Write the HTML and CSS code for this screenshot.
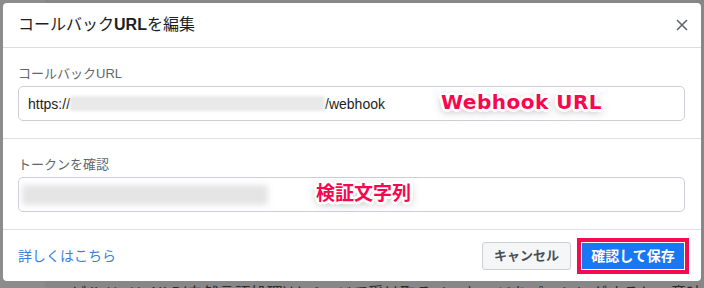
FILE: index.html
```html
<!DOCTYPE html>
<html lang="ja">
<head>
<meta charset="utf-8">
<title>コールバックURLを編集</title>
<link rel="stylesheet" href="styles.css">
</head>
<body>
<div class="page">
  <div class="side"></div>
  <div class="main">
    <p class="bgtext">ビルドインNLP(自然言語処理)はページで受け取るメッセージをパーシングすると、意味の検知で</p>
  </div>
</div>
<div class="dialog">
  <div class="head">
    <h1 class="title">コールバック<span class="b">URL</span>を編集</h1>
    <button class="close" aria-label="閉じる">
      <svg width="12" height="12" viewBox="0 0 12 12"><path d="M1 1L11 11M11 1L1 11" stroke="#606770" stroke-width="1.6" fill="none"/></svg>
    </button>
  </div>
  <div class="section">
    <label class="label">コールバックURL</label>
    <div class="field">
      <span class="val">https://</span><span class="blur b1"></span><span class="val">/webhook</span>
      <span class="note note1">Webhook URL</span>
    </div>
  </div>
  <div class="section">
    <label class="label">トークンを確認</label>
    <div class="field field2">
      <span class="blur b2"></span>
      <span class="note note2">検証文字列</span>
    </div>
  </div>
  <div class="foot">
    <a class="link" href="#">詳しくはこちら</a>
    <div class="btns">
      <button class="btn cancel">キャンセル</button>
      <button class="btn primary">確認して保存</button>
    </div>
  </div>
</div>
</body>
</html>
```
FILE: styles.css
```css
* { box-sizing: border-box; }
html, body { margin: 0; padding: 0; }
body {
  width: 704px;
  height: 288px;
  overflow: hidden;
  background: #7c7c7c;
  font-family: "Liberation Sans", "Noto Sans CJK JP", sans-serif;
  position: relative;
}
.page { display: flex; height: 288px; overflow: hidden; }
.side { width: 45px; background: #8c8c8c; }
.main { flex: 1; background: #878787; padding-top: 282px; overflow: hidden; }
.bgtext {
  margin: 0 0 0 26px;
  font-size: 16px;
  line-height: 20px;
  color: #2b2b2b;
  white-space: nowrap;
  font-family: "Noto Sans CJK JP", sans-serif;
}
.dialog {
  position: absolute;
  left: 3px;
  top: 3px;
  width: 698px;
  height: 278px;
  background: #fff;
  border-radius: 4px;
  display: flex;
  flex-direction: column;
}
.head {
  height: 45px;
  border-bottom: 1px solid #dadde1;
  display: flex;
  align-items: center;
  justify-content: space-between;
  padding: 0 12px 0 15px;
}
.title {
  margin: 0;
  font-size: 16px;
  font-weight: normal;
  color: #1c1e21;
  line-height: 20px;
  font-family: "Liberation Sans", "Noto Sans CJK JP", sans-serif;
}
.title .b { font-weight: bold; }
.close {
  border: 0;
  background: none;
  padding: 0;
  width: 14px;
  height: 14px;
  display: flex;
  align-items: center;
  justify-content: center;
}
.section {
  height: 91px;
  border-bottom: 1px solid #dadde1;
  padding: 18px 16px 0 15px;
}
.label {
  display: block;
  font-size: 13px;
  line-height: 16px;
  color: #606770;
  margin-bottom: 4px;
}
.field {
  position: relative;
  height: 35px;
  border: 1px solid #ccd0d5;
  border-radius: 5px;
  display: flex;
  align-items: center;
  padding-left: 9px;
}
.val {
  font-size: 14px;
  color: #1c1e21;
  line-height: 18px;
}
.blur {
  display: block;
  background: #e9e9e9;
  filter: blur(1.5px);
}
.b1 { width: 255px; height: 15px; }
.field2 { padding-left: 3px; }
.b2 { width: 246px; height: 20px; filter: blur(3px); background: #e4e4e4; }
.note {
  position: absolute;
  color: #f8074f;
  font-weight: bold;
  white-space: nowrap;
  text-shadow:
    2px 0 0 #fff, -2px 0 0 #fff, 0 2px 0 #fff, 0 -2px 0 #fff,
    2px 2px 0 #fff, -2px -2px 0 #fff, 2px -2px 0 #fff, -2px 2px 0 #fff,
    3px 0 0 #fff, -3px 0 0 #fff, 0 3px 0 #fff, 0 -3px 0 #fff,
    0 2px 8px rgba(0,0,0,0.5);
}
.note1 {
  left: 422px;
  top: 3px;
  font-family: "DejaVu Sans", sans-serif;
  font-size: 20px;
  line-height: 24px;
  letter-spacing: 0.5px;
}
.note2 {
  left: 297px;
  top: 1px;
  font-family: "Noto Sans CJK JP", sans-serif;
  font-size: 19px;
  line-height: 26px;
}
.foot {
  flex: 1;
  display: flex;
  align-items: center;
  justify-content: space-between;
  padding: 0 16px 0 15px;
}
.link {
  font-size: 14px;
  color: #3b7ee0;
  text-decoration: none;
  line-height: 18px;
}
.btns { display: flex; gap: 10px; }
.btn {
  height: 28px;
  border-radius: 3px;
  font-family: "Liberation Sans", "Noto Sans CJK JP", sans-serif;
  font-weight: bold;
  line-height: 18px;
  padding: 0;
  white-space: nowrap;
}
.cancel {
  width: 89px;
  font-size: 13px;
  background: #f5f6f7;
  border: 1px solid #ccd0d5;
  color: #4b4f56;
}
.primary {
  width: 104px;
  font-size: 14px;
  background: #1877f2;
  border: 1px solid #ffffff;
  border-radius: 0;
  color: #fff;
  outline: 4px solid #f70a50;
  outline-offset: 0;
}
```
